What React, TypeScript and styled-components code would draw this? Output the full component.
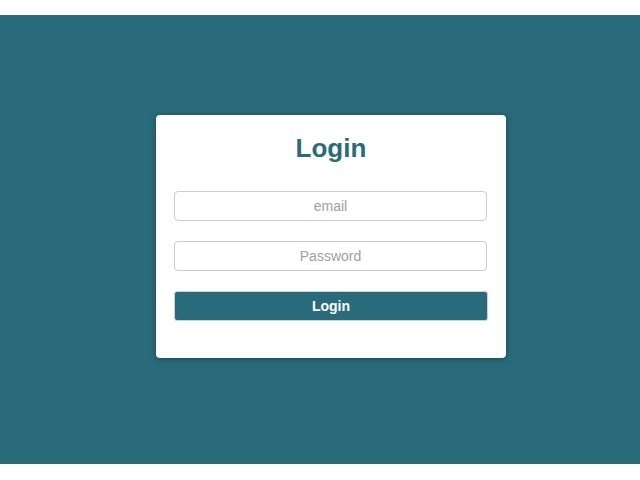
import styled, { createGlobalStyle } from 'styled-components';

const TEAL = '#2a6b7b';

const GlobalStyle = createGlobalStyle`
  body {
    margin: 0;
    background: #ffffff;
    font-family: 'Liberation Sans', Arial, sans-serif;
  }
`;

const Backdrop = styled.div`
  margin-top: 15px;
  height: 449px;
  padding: 0 0 7px 22px;
  box-sizing: border-box;
  background: ${TEAL};
  display: flex;
  align-items: center;
  justify-content: center;
`;

const Card = styled.form`
  width: 350px;
  box-sizing: border-box;
  padding: 16px 18px 37px;
  background: #ffffff;
  border-radius: 4px;
  box-shadow: 0 1px 6px rgba(0, 0, 0, 0.35);
  display: flex;
  flex-direction: column;
`;

const Title = styled.h2`
  margin: 0 0 26px;
  font-size: 26px;
  line-height: 34px;
  font-weight: bold;
  color: ${TEAL};
  text-align: center;
`;

const Field = styled.input`
  width: 313px;
  height: 30px;
  box-sizing: border-box;
  margin-bottom: 20px;
  border: 1px solid #cccccc;
  border-radius: 4px;
  font-family: inherit;
  font-size: 14px;
  text-align: center;
  color: #333333;
  outline: none;

  &::placeholder {
    color: #a0a0a0;
  }
`;

const SubmitButton = styled.button`
  width: 314px;
  height: 30px;
  border: 1px solid #c8d3d6;
  border-radius: 3px;
  background: ${TEAL};
  color: #ffffff;
  font-family: inherit;
  font-size: 14px;
  font-weight: bold;
  cursor: pointer;
`;

function App() {
  return (
    <>
      <GlobalStyle />
      <Backdrop>
        <Card onSubmit={(e) => e.preventDefault()}>
          <Title>Login</Title>
          <Field type='email' placeholder='email' />
          <Field type='password' placeholder='Password' />
          <SubmitButton type='submit'>Login</SubmitButton>
        </Card>
      </Backdrop>
    </>
  );
}

export default App;
